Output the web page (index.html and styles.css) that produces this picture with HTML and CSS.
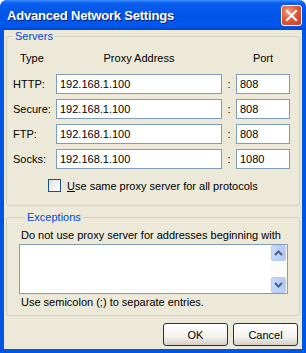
FILE: index.html
```html
<!DOCTYPE html>
<html lang="en">
  <head>
    <meta charset="UTF-8" />
    <title>Advanced Network Settings</title>
    <link rel="stylesheet" href="styles.css">
  </head>
  <body>
    <div class="window">
      <div class="titlebar">
        <span class="title">Advanced Network Settings</span>
        <span class="close">
          <svg width="13" height="13" viewBox="0 0 13 13">
            <path d="M2 2 L11 11 M11 2 L2 11" stroke="#fff" stroke-width="2.2" stroke-linecap="square" />
          </svg>
        </span>
      </div>
      <div class="client">
        <fieldset class="group servers">
          <legend>Servers</legend>
          <div class="proxy-grid">
            <div class="head head-type">Type</div>
            <div class="head">Proxy Address</div>
            <div></div>
            <div class="head">Port</div>

            <label class="row-label">HTTP:</label>
            <input class="field" type="text" value="192.168.1.100" />
            <span class="colon">:</span>
            <input class="field" type="text" value="808" />

            <label class="row-label">Secure:</label>
            <input class="field" type="text" value="192.168.1.100" />
            <span class="colon">:</span>
            <input class="field" type="text" value="808" />

            <label class="row-label">FTP:</label>
            <input class="field" type="text" value="192.168.1.100" />
            <span class="colon">:</span>
            <input class="field" type="text" value="808" />

            <label class="row-label">Socks:</label>
            <input class="field" type="text" value="192.168.1.100" />
            <span class="colon">:</span>
            <input class="field" type="text" value="1080" />
          </div>
          <div class="check-row">
            <span class="checkbox"></span>
            <span><u>U</u>se same proxy server for all protocols</span>
          </div>
        </fieldset>

        <fieldset class="group exceptions">
          <legend>Exceptions</legend>
          <div class="note">Do not use proxy server for addresses beginning with</div>
          <div class="textbox">
            <div class="scrollbar">
              <span class="arrow">
                <svg width="9" height="6" viewBox="0 0 9 6"><path d="M1 5 L4.5 1.5 L8 5" fill="none" stroke="#4d6185" stroke-width="2" /></svg>
              </span>
              <span class="track"></span>
              <span class="arrow">
                <svg width="9" height="6" viewBox="0 0 9 6"><path d="M1 1 L4.5 4.5 L8 1" fill="none" stroke="#4d6185" stroke-width="2" /></svg>
              </span>
            </div>
          </div>
          <div class="note">Use semicolon (;) to separate entries.</div>
        </fieldset>

        <div class="buttons">
          <button class="btn">OK</button>
          <button class="btn">Cancel</button>
        </div>
      </div>
    </div>
  </body>
</html>
```

FILE: styles.css
```css
body {
  margin: 0;
  padding: 0;
  background: #fff;
  font-family: 'Liberation Sans', Arial, sans-serif;
  font-size: 11px;
  color: #000;
}

.window {
  width: 306px;
  height: 353px;
  display: flex;
  flex-direction: column;
  background: #0055e5;
  border-radius: 7px 7px 0 0;
  overflow: hidden;
}

/* title bar */
.titlebar {
  height: 30px;
  display: flex;
  align-items: center;
  padding: 0 4px 0 7px;
  background: linear-gradient(#3c8dff 0, #0a5ff0 10%, #0055e5 45%, #0058ee 85%, #0046d2 100%);
}

.title {
  flex: 1;
  color: #fff;
  font-weight: bold;
  font-size: 13px;
  text-shadow: 1px 1px 0 #0a1e7a;
  letter-spacing: -0.2px;
}

.close {
  width: 19px;
  height: 19px;
  border: 1px solid #fff;
  border-radius: 3px;
  display: flex;
  align-items: center;
  justify-content: center;
  background: radial-gradient(circle at 35% 30%, #f0a080 0, #e2593a 45%, #c43d1c 100%);
}

/* dialog body */
.client {
  flex: 1;
  margin: 0 4px 4px 4px;
  padding: 0 2px;
  background: #ece9d8;
  display: flex;
  flex-direction: column;
}

.group {
  margin: 0;
  padding: 0;
  border: 1px solid #d0d0bf;
  border-radius: 3px;
}

.group legend {
  margin-left: 6px;
  padding: 0 2px;
  color: #0046d5;
  line-height: 13px;
}

.proxy-grid {
  display: grid;
  grid-template-columns: 43px 166px 14px 54px;
  row-gap: 5px;
  padding: 9px 0 0 6px;
  align-items: center;
}

.head {
  text-align: center;
  line-height: 13px;
  margin-bottom: 4px;
}

.head-type {
  text-align: left;
  padding-left: 7px;
}

.row-label {
  line-height: 13px;
}

.colon {
  text-align: center;
}

.field {
  box-sizing: border-box;
  height: 20px;
  width: 100%;
  margin: 0;
  padding: 0 3px;
  border: 1px solid #7f9db9;
  background: #fff;
  font-family: inherit;
  font-size: 11px;
  color: #000;
}

.check-row {
  display: flex;
  align-items: center;
  gap: 6px;
  padding: 10px 0 13px 41px;
}

.checkbox {
  box-sizing: border-box;
  width: 13px;
  height: 13px;
  border: 1px solid #1c5180;
  background: linear-gradient(135deg, #dcdcd7 0, #fff 85%);
}

.exceptions {
  margin-top: 5px;
  padding: 5px 11px 6px 12px;
}

.note {
  padding-left: 2px;
  line-height: 13px;
}

.textbox {
  box-sizing: border-box;
  height: 50px;
  margin: 2px 0 2px;
  border: 1px solid #7f9db9;
  background: #fff;
  display: flex;
  justify-content: flex-end;
}

.scrollbar {
  width: 17px;
  display: flex;
  flex-direction: column;
  background: #fbfbf8;
}

.arrow {
  box-sizing: border-box;
  height: 16px;
  margin: 0 1px;
  border: 1px solid #b8cbf5;
  border-radius: 2px;
  background: linear-gradient(90deg, #c8d8fc, #b5c9f7);
  display: flex;
  align-items: center;
  justify-content: center;
}

.track {
  flex: 1;
}

.buttons {
  display: flex;
  justify-content: flex-end;
  gap: 5px;
  padding: 7px 2px 0 0;
}

.btn {
  width: 65px;
  height: 23px;
  border: 1px solid #003c74;
  border-radius: 3px;
  background: linear-gradient(#fff 0, #f4f3ee 60%, #d6d0c5 100%);
  font-family: inherit;
  font-size: 11px;
  color: #000;
  padding: 0;
}
```
